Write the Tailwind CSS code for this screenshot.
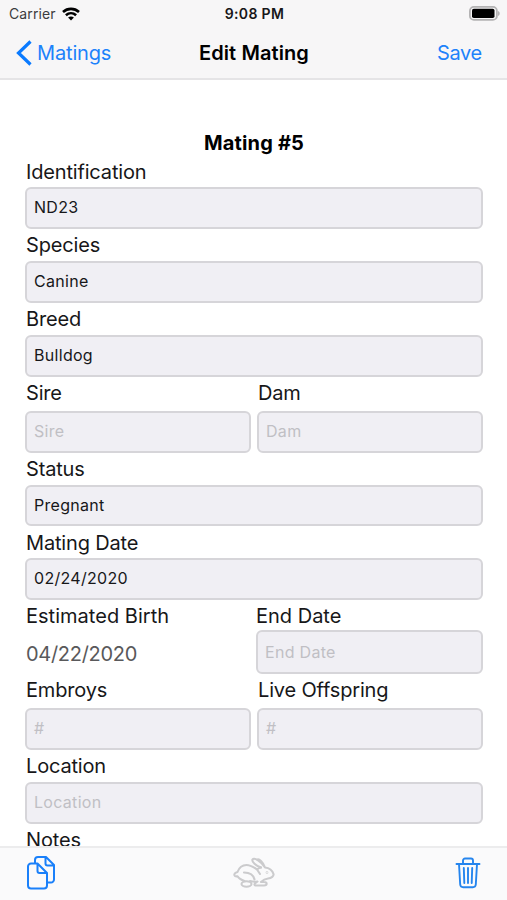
<!DOCTYPE html>
<html lang="en">
<head>
<meta charset="utf-8">
<title>Edit Mating</title>
<script src="https://cdn.jsdelivr.net/npm/@tailwindcss/browser@4"></script>
</head>
<body class="w-[507px] h-[900px] overflow-hidden bg-white font-['Inter','Liberation_Sans',sans-serif] text-[#171719]">
<div class="flex h-[900px] flex-col">
  <header class="h-20 shrink-0 border-b-2 border-[#e5e4e6] bg-[#f7f6f7]">
    <div class="grid h-[27px] grid-cols-3 items-center pl-[9px] pr-[7px] text-sm">
      <div class="flex items-center gap-[6px] text-[#3c3c3e]"><span class="tracking-[0.1px]">Carrier</span>
        <svg class="h-[14px] w-[18px] text-black" viewBox="0 0 18 14" fill="none" stroke="currentColor" stroke-width="2.6"><path d="M1 5C5.600.8 12.400.8 17 5M3.900 8.200c3-2.700 7.200-2.700 10.200 0"/><path d="M9 13.500 6.100 10.600c1.700-1.400 4.100-1.400 5.800 0z" fill="currentColor" stroke="none"/></svg>
      </div>
      <div class="pt-px text-center text-[14px] font-semibold tracking-[0.35px]">9:08 PM</div>
      <svg class="h-[15px] w-[31px] justify-self-end" viewBox="0 0 31 15"><rect x=".9" y=".9" width="27" height="13" rx="4" fill="#f7f6f7" stroke="#b4b3b4" stroke-width="1.800"/><rect x="3" y="2.800" width="22.500" height="9.200" rx="1.800" fill="#000"/><path d="M29 5c2.300.8 2.300 4.200 0 5z" fill="#b4b3b4"/></svg>
    </div>
    <div class="grid h-[51px] grid-cols-3 items-center pl-4 pr-[25px] text-xl text-[#1d82fb]">
      <div class="flex items-center gap-[5px]">
        <svg class="h-[26px] w-4" viewBox="0 0 16 26" fill="none" stroke="#0a7aff" stroke-width="3.200"><path d="M14.500 1.500 2.500 13l12 11.500"/></svg>
        <span class="tracking-[-0.15px]">Matings</span>
      </div>
      <div class="pl-[10px] text-center font-semibold tracking-[0.1px] whitespace-nowrap text-black">Edit Mating</div>
      <div class="text-right tracking-[-0.3px]">Save</div>
    </div>
  </header>

  <main class="h-[766px] shrink-0 overflow-hidden pl-[25px] pr-6 text-[20px] leading-[33px] tracking-[-0.17px]">
    <h1 class="mt-[47px] h-7 text-center leading-8 font-bold tracking-[0.15px] text-black">Mating #5</h1>
    <div class="h-8 pl-px leading-[34px]">Identification</div>
    <div class="flex h-[42px] items-center rounded-md border-2 border-[#d6d5d9] bg-[#f0eff4] px-[7px] pb-[2px] text-base tracking-[0.3px]">ND23</div>
    <div class="h-8 pl-px">Species</div>
    <div class="flex h-[42px] items-center rounded-md border-2 border-[#d6d5d9] bg-[#f0eff4] px-[7px] pb-[2px] text-base tracking-[0.3px]">Canine</div>
    <div class="h-8 pl-px">Breed</div>
    <div class="flex h-[42px] items-center rounded-md border-2 border-[#d6d5d9] bg-[#f0eff4] px-[7px] pb-[2px] text-base tracking-[0.3px]">Bulldog</div>
    <div class="grid grid-cols-2 gap-x-[6px]">
      <div class="h-[34px] pl-px">Sire</div><div class="h-[34px] pl-px">Dam</div>
      <div class="flex h-[42px] items-center rounded-md border-2 border-[#d6d5d9] bg-[#f0eff4] px-[7px] pb-[2px] text-base tracking-[0.3px] text-[#c0bfc4]">Sire</div>
      <div class="flex h-[42px] items-center rounded-md border-2 border-[#d6d5d9] bg-[#f0eff4] px-[7px] pb-[2px] text-base tracking-[0.3px] text-[#c0bfc4]">Dam</div>
    </div>
    <div class="h-8 pl-px">Status</div>
    <div class="flex h-[41px] items-center rounded-md border-2 border-[#d6d5d9] bg-[#f0eff4] px-[7px] pb-px text-base tracking-[0.3px]">Pregnant</div>
    <div class="h-8 pl-px leading-[34px]">Mating Date</div>
    <div class="flex h-[42px] items-center rounded-md border-2 border-[#d6d5d9] bg-[#f0eff4] px-[7px] pb-[2px] text-base tracking-[0.3px]">02/24/2020</div>
    <div class="grid grid-cols-[225px_1fr] gap-x-[6px]">
      <div class="h-[30px] pl-px tracking-[0.02px]">Estimated Birth</div><div class="h-[30px] tracking-normal">End Date</div>
      <div class="flex h-11 items-center pl-px pt-[4px] tracking-[-0.3px] text-[#59595b]">04/22/2020</div>
      <div class="flex h-11 items-center rounded-md border-2 border-[#d6d5d9] bg-[#f0eff4] px-[7px] text-base tracking-[0.3px] text-[#c0bfc4]">End Date</div>
    </div>
    <div class="grid grid-cols-2 gap-x-[6px]">
      <div class="h-[34px] pl-px">Embroys</div><div class="h-[34px] pl-px">Live Offspring</div>
      <div class="flex h-[42px] items-center rounded-md border-2 border-[#d6d5d9] bg-[#f0eff4] px-[7px] pb-[2px] text-base tracking-[0.3px] text-[#c0bfc4]">#</div>
      <div class="flex h-[42px] items-center rounded-md border-2 border-[#d6d5d9] bg-[#f0eff4] px-[7px] pb-[2px] text-base tracking-[0.3px] text-[#c0bfc4]">#</div>
    </div>
    <div class="h-8 pl-px">Location</div>
    <div class="flex h-[42px] items-center rounded-md border-2 border-[#d6d5d9] bg-[#f0eff4] px-[7px] pb-[2px] text-base tracking-[0.3px] text-[#c0bfc4]">Location</div>
    <div class="h-8 pl-px">Notes</div>
  </main>

  <footer class="flex h-[54px] shrink-0 items-start justify-between border-t-2 border-[#ececed] bg-[#fafafb] pl-[26px] pr-[26px] pt-[7px]">
    <svg class="h-9 w-[30px]" viewBox="0 0 30 36" fill="none" stroke="#1a80fa" stroke-width="2" stroke-linejoin="round"><path d="M9 7.500V5a3 3 0 0 1 3-3h8l8 8v14.500a3 3 0 0 1-3 3h-3M19.500 2v6.500a2 2 0 0 0 2 2H28M5 8.500h6.500l9.500 9.500v12.500a3 3 0 0 1-3 3H5a3 3 0 0 1-3-3v-19a3 3 0 0 1 3-3zM11.500 8.500V16a2 2 0 0 0 2 2H21"/></svg>
    <svg class="mr-[4px] mt-[2px] h-8 w-[42px]" viewBox="0 0 42 32" fill="none" stroke="#cbcbcd" stroke-width="2.100" stroke-linecap="round" stroke-linejoin="round"><path d="M28 10.500C23 8.500 18.500 5 19.500 2.500 21 0 27 3.500 32 10.500c4.500.5 7.500 3.500 8.500 6.500.5 2-2 4.200-5.500 4.500-3 .3-5 1.500-7 3.500h3c3.500 0 3.500 3.500 0 3.500h-8c-1.800 0-2-1.300-.8-2.300l2.300-1.700c-2.500.5-5 .3-7.500-.5M24 2.800c2-1.500 6 2 8 7.700"/><path d="M28 10.500c-1.500.3-3 1.200-4 2-3.500-2.500-6.500-4.500-10.500-4.500-4.500 0-7.500 3-9 7-2.500.5-3.500 2-3 3.300.5 1.200 2 1.200 3 1 1.500 2.500 4 3.700 7 4.700M11 15.500c6 0 9.500 2.500 10.500 7M24 12.500l3 4.500"/><ellipse cx="13.500" cy="27" rx="5" ry="2.700"/><circle cx="34" cy="15.500" r=".3"/></svg>
    <svg class="mt-[2px] h-8 w-[26px]" viewBox="0 0 26 32" fill="none" stroke="#2585ee" stroke-width="1.900" stroke-linecap="round" stroke-linejoin="round"><path d="M1.500 7h23M8 7V3.500a2 2 0 0 1 2-2h6a2 2 0 0 1 2 2V7M4 7l1.200 20.500a3 3 0 0 0 3 2.700h9.600a3 3 0 0 0 3-2.700L22 7"/><path d="m8.800 11 .5 15M13 11v15M17.200 11l-.5 15"/></svg>
  </footer>
</div>
</body>
</html>
